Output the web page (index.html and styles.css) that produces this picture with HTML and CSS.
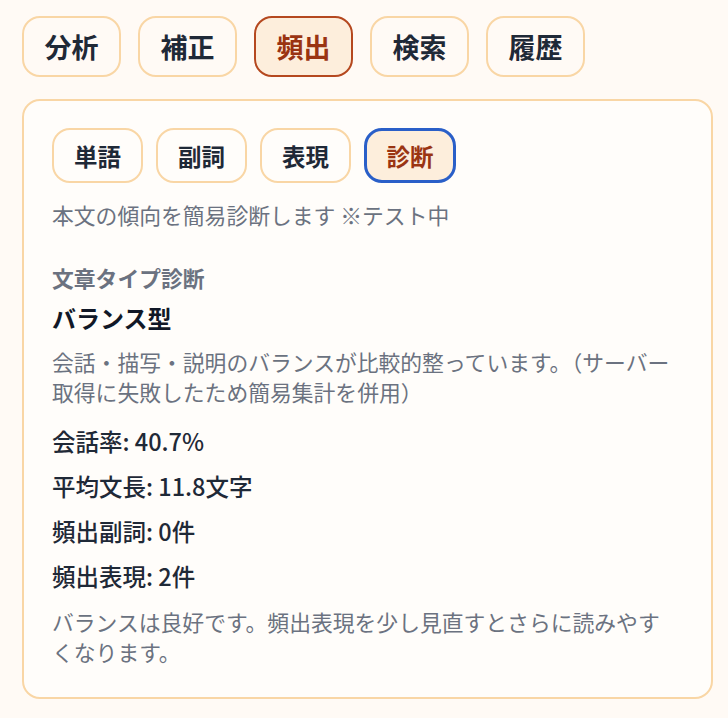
FILE: index.html
```html
<!DOCTYPE html>
<html lang="ja">
<head>
<meta charset="utf-8">
<title>頻出 - 診断</title>
<link rel="stylesheet" href="styles.css">
</head>
<body>
<div class="page">
  <nav class="tabs">
    <button class="tab">分析</button>
    <button class="tab">補正</button>
    <button class="tab active">頻出</button>
    <button class="tab">検索</button>
    <button class="tab">履歴</button>
  </nav>
  <section class="card">
    <div class="subtabs">
      <button class="subtab">単語</button>
      <button class="subtab">副詞</button>
      <button class="subtab">表現</button>
      <button class="subtab active focus">診断</button>
    </div>
    <p class="desc">本文の傾向を簡易診断します ※テスト中</p>
    <h3 class="label">文章タイプ診断</h3>
    <h2 class="type">バランス型</h2>
    <p class="note">会話・描写・説明のバランスが比較的整っています。（サーバー<br>取得に失敗したため簡易集計を併用）</p>
    <div class="stats">
      <div class="stat">会話率: 40.7%</div>
      <div class="stat">平均文長: 11.8文字</div>
      <div class="stat">頻出副詞: 0件</div>
      <div class="stat">頻出表現: 2件</div>
    </div>
    <p class="advice">バランスは良好です。頻出表現を少し見直すとさらに読みやす<br>くなります。</p>
  </section>
</div>
</body>
</html>
```

FILE: styles.css
```css
* { box-sizing: border-box; }
html, body {
  margin: 0;
  padding: 0;
  background: #fffaf5;
}
body {
  font-family: "Noto Sans CJK JP", "Noto Sans", sans-serif;
  color: #1f2937;
}
.page {
  padding: 16px 15px 20px 22px;
}
.tabs {
  display: flex;
  gap: 17px;
}
.tab {
  font-family: inherit;
  width: 99px;
  height: 61px;
  padding: 0;
  display: flex;
  align-items: center;
  justify-content: center;
  font-size: 27px;
  font-weight: 700;
  color: #1f2937;
  background: #fffaf5;
  border: 2px solid #f9d6a5;
  border-radius: 18px;
}
.tab.active {
  background: #fdeedc;
  border-color: #b5481f;
  color: #9a3412;
}
.card {
  margin-top: 22px;
  width: 691px;
  background: #fffdfa;
  border: 2px solid #f9d6a5;
  border-radius: 18px;
  padding: 27px 14px 30px 28px;
}
.subtabs {
  display: flex;
  gap: 13px;
}
.subtab {
  font-family: inherit;
  width: 91px;
  height: 55px;
  padding: 0;
  display: flex;
  align-items: center;
  justify-content: center;
  font-size: 23.5px;
  font-weight: 700;
  color: #1f2937;
  background: #fffdfa;
  border: 2px solid #f9d6a5;
  border-radius: 18px;
}
.subtab.active {
  background: #fdeedc;
  color: #9a3412;
}
.subtab.focus {
  width: 92px;
  border: 3px solid #2a5fc8;
}
.desc {
  margin: 17px 0 0;
  font-size: 21.8px;
  line-height: 30px;
  color: #6b7280;
  white-space: nowrap;
}
.label {
  margin: 33px 0 0;
  font-size: 21.8px;
  line-height: 30px;
  font-weight: 700;
  color: #6b7280;
}
.type {
  margin: 9px 0 0;
  font-size: 24px;
  line-height: 32px;
  font-weight: 700;
  color: #111827;
}
.note, .advice {
  margin: 13px 0 0;
  font-size: 21.8px;
  line-height: 30px;
  color: #6b7280;
  white-space: nowrap;
}
.stats {
  margin-top: 18px;
  display: flex;
  flex-direction: column;
  gap: 13px;
}
.stat {
  font-size: 23.5px;
  line-height: 32px;
  font-weight: 500;
  color: #1f2937;
}
.advice {
  margin-top: 15px;
}
```
